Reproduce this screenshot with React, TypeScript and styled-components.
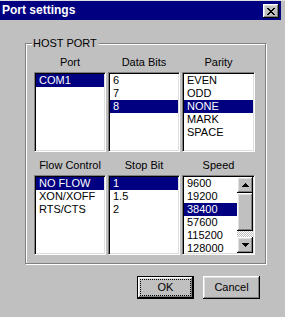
import React from 'react';
import styled, { createGlobalStyle } from 'styled-components';

const Global = createGlobalStyle`
  html, body { margin: 0; padding: 0; background: #c0c0c0; }
  body { font-family: "Liberation Sans", Arial, sans-serif; }
`;

const raised = `
  box-shadow: inset -1px -1px #000, inset 1px 1px #fff, inset -2px -2px #808080, inset 2px 2px #dfdfdf;
`;

const Window = styled.div`
  width: 285px;
  height: 317px;
  box-sizing: border-box;
  background: #c0c0c0;
  border-top: 1px solid #dfdfdf;
  padding-right: 4px;
  display: flex;
  flex-direction: column;
  font-family: "Liberation Sans", Arial, sans-serif;
  font-size: 11px;
  color: #000;
  overflow: hidden;
`;

const TitleBar = styled.div`
  height: 19px;
  background: #000080;
  display: flex;
  align-items: center;
  justify-content: space-between;
  padding: 0 2px 0 2px;
  flex-shrink: 0;
`;

const Title = styled.span`
  color: #fff;
  font-weight: bold;
  font-size: 12px;
  line-height: 19px;
`;

const CloseButton = styled.div`
  width: 16px;
  height: 14px;
  margin-top: 1px;
  box-sizing: border-box;
  background: #c0c0c0;
  ${raised}
  display: flex;
  align-items: center;
  justify-content: center;
  padding-right: 1px;
`;

const Body = styled.div`
  padding: 23px 0 0 25px;
  display: flex;
  flex-direction: column;
`;

const GroupBox = styled.div`
  position: relative;
  width: 241px;
  height: 221px;
  box-sizing: border-box;
  border: 1px solid #808080;
  box-shadow: inset 1px 1px #fff, 1px 1px #fff;
  padding: 12px 12px 8px 8px;
  display: flex;
  flex-direction: column;
  gap: 7px;
`;

const Legend = styled.span`
  position: absolute;
  top: -7px;
  left: 6px;
  padding: 0 2px 0 1px;
  background: #c0c0c0;
  line-height: 13px;
`;

const Row = styled.div`
  display: grid;
  grid-template-columns: 72px 72px 73px;
  column-gap: 2px;
`;

const Column = styled.div`
  display: flex;
  flex-direction: column;
  gap: 3px;
`;

const Header = styled.div`
  height: 13px;
  line-height: 13px;
  text-align: center;
`;

const ListBox = styled.div`
  height: 80px;
  box-sizing: border-box;
  border: 1px solid;
  border-color: #808080 #fff #fff #808080;
  box-shadow: inset 1px 1px #000, inset -1px -1px #dfdfdf;
  background: #fff;
  padding: 1px;
  display: flex;
  overflow: hidden;
`;

const Items = styled.div`
  flex: 1;
  display: flex;
  flex-direction: column;
  overflow: hidden;
`;

const Item = styled.div<{ $selected?: boolean }>`
  height: 13px;
  flex-shrink: 0;
  line-height: 13px;
  padding-left: 3px;
  white-space: nowrap;
  background: ${(p) => (p.$selected ? '#000080' : 'transparent')};
  color: ${(p) => (p.$selected ? '#fff' : '#000')};
`;

const ScrollBar = styled.div`
  width: 16px;
  display: flex;
  flex-direction: column;
  flex-shrink: 0;
`;

const ArrowButton = styled.div`
  width: 16px;
  height: 16px;
  box-sizing: border-box;
  background: #c0c0c0;
  ${raised}
  display: flex;
  align-items: center;
  justify-content: center;
  flex-shrink: 0;
`;

const Thumb = styled.div`
  height: 38px;
  background: #c0c0c0;
  ${raised}
  flex-shrink: 0;
`;

const Track = styled.div`
  flex: 1;
  background: repeating-conic-gradient(#c0c0c0 0 25%, #fff 0 50%) 0 0 / 2px 2px;
`;

const ButtonRow = styled.div`
  width: 242px;
  box-sizing: border-box;
  margin-top: 12px;
  padding-right: 7px;
  display: flex;
  justify-content: flex-end;
  gap: 9px;
`;

const Button = styled.div<{ $default?: boolean }>`
  width: 57px;
  height: 23px;
  box-sizing: border-box;
  background: #c0c0c0;
  display: flex;
  padding: ${(p) => (p.$default ? '2px' : '3px')};
  ${(p) =>
    p.$default
      ? `border: 1px solid #000; box-shadow: inset -1px -1px #000, inset 1px 1px #fff, inset -2px -2px #808080, inset 2px 2px #dfdfdf;`
      : raised}
`;

const ButtonFace = styled.span<{ $focused?: boolean }>`
  flex: 1;
  border: 1px dotted ${(p) => (p.$focused ? '#000' : 'transparent')};
  display: flex;
  align-items: center;
  justify-content: center;
  line-height: 13px;
`;

const CloseIcon = () => (
  <svg width="8" height="7" viewBox="0 0 8 7" shapeRendering="crispEdges">
    <path
      fill="#000"
      d="M0 0h2v1H0z M6 0h2v1H6z M1 1h2v1H1z M5 1h2v1H5z M2 2h4v1H2z M3 3h2v1H3z M2 4h4v1H2z M1 5h2v1H1z M5 5h2v1H5z M0 6h2v1H0z M6 6h2v1H6z"
    />
  </svg>
);

const Arrow = ({ up }: { up?: boolean }) => (
  <svg width="7" height="4" viewBox="0 0 7 4" shapeRendering="crispEdges">
    <path
      fill="#000"
      d={
        up
          ? 'M3 0h1v1H3z M2 1h3v1H2z M1 2h5v1H1z M0 3h7v1H0z'
          : 'M0 0h7v1H0z M1 1h5v1H1z M2 2h3v1H2z M3 3h1v1H3z'
      }
    />
  </svg>
);

type ListDef = { title: string; items: string[]; selected: number; scroll?: boolean };

const topRow: ListDef[] = [
  { title: 'Port', items: ['COM1'], selected: 0 },
  { title: 'Data Bits', items: ['6', '7', '8'], selected: 2 },
  { title: 'Parity', items: ['EVEN', 'ODD', 'NONE', 'MARK', 'SPACE'], selected: 2 },
];

const bottomRow: ListDef[] = [
  { title: 'Flow Control', items: ['NO FLOW', 'XON/XOFF', 'RTS/CTS'], selected: 0 },
  { title: 'Stop Bit', items: ['1', '1.5', '2'], selected: 0 },
  {
    title: 'Speed',
    items: ['9600', '19200', '38400', '57600', '115200', '128000'],
    selected: 2,
    scroll: true,
  },
];

const List = ({ def }: { def: ListDef }) => (
  <Column>
    <Header>{def.title}</Header>
    <ListBox>
      <Items>
        {def.items.map((it, i) => (
          <Item key={it} $selected={i === def.selected}>
            {it}
          </Item>
        ))}
      </Items>
      {def.scroll && (
        <ScrollBar>
          <ArrowButton>
            <Arrow up />
          </ArrowButton>
          <Thumb />
          <Track />
          <ArrowButton>
            <Arrow />
          </ArrowButton>
        </ScrollBar>
      )}
    </ListBox>
  </Column>
);

export default function App() {
  return (
    <>
      <Global />
      <Window>
        <TitleBar>
          <Title>Port settings</Title>
          <CloseButton>
            <CloseIcon />
          </CloseButton>
        </TitleBar>
        <Body>
          <GroupBox>
            <Legend>HOST PORT</Legend>
            <Row>
              {topRow.map((d) => (
                <List key={d.title} def={d} />
              ))}
            </Row>
            <Row>
              {bottomRow.map((d) => (
                <List key={d.title} def={d} />
              ))}
            </Row>
          </GroupBox>
          <ButtonRow>
            <Button $default>
              <ButtonFace $focused>OK</ButtonFace>
            </Button>
            <Button>
              <ButtonFace>Cancel</ButtonFace>
            </Button>
          </ButtonRow>
        </Body>
      </Window>
    </>
  );
}
